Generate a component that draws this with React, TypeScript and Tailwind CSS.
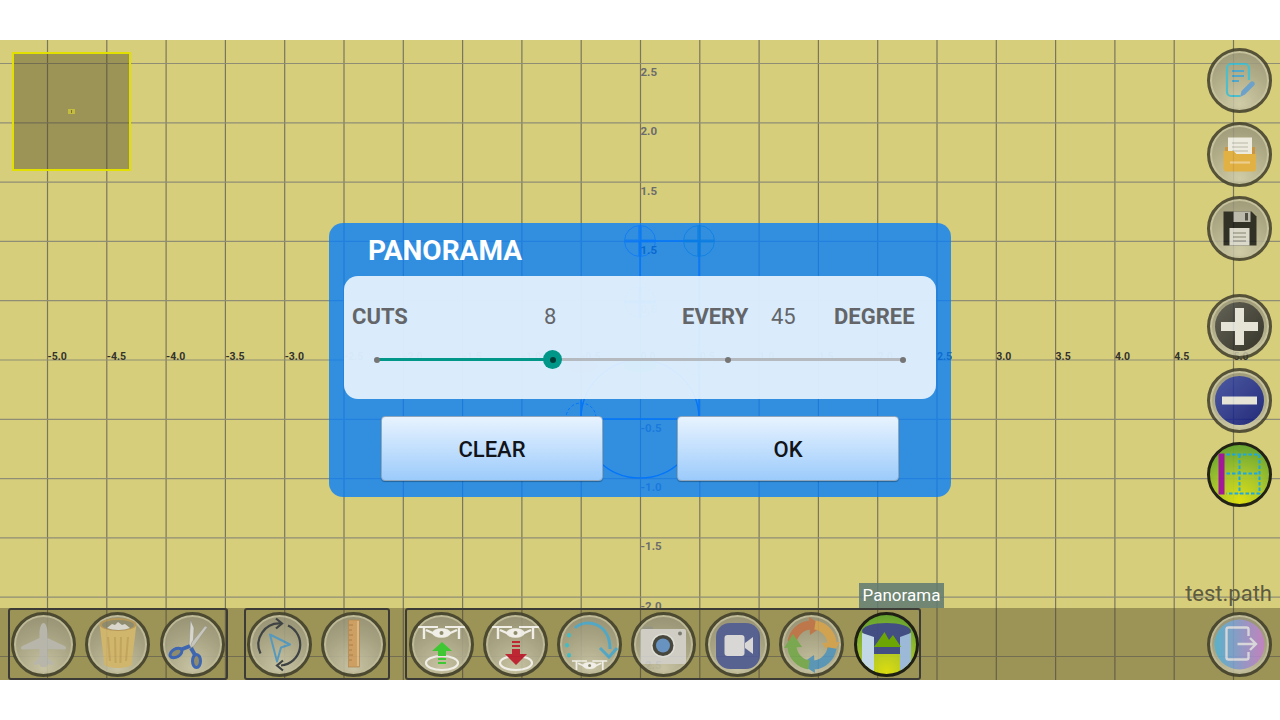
import type { ReactNode } from 'react';

const XS = [-5, -4.5, -4, -3.5, -3, -2.5, -2, -1.5, -1, -0.5, 0, 0.5, 1, 1.5, 2, 2.5, 3, 3.5, 4, 4.5, 5];
const YS = [2.5, 2, 1.5, 1, 0.5, 0, -0.5, -1, -1.5, -2, -2.5];
const STEP = 59.3;
const CX = 640.5;
const CY = 320; // canvas starts 40px down the page

function Drone({ x, y, tone, opacity = 0.75 }: { x: number; y: number; tone: string; opacity?: number }) {
  return (
    <g transform={`translate(${x} ${y})`} stroke={tone} fill="none" opacity={opacity}>
      <circle r="15.500" strokeWidth="1" />
      <path d="M-15 0H15" strokeWidth="3" />
      <path d="M0 -15V15" strokeWidth="3.500" />
    </g>
  );
}

function GridCanvas() {
  return (
    <svg className="absolute inset-0" width="1280" height="640" viewBox="0 0 1280 640">
      {XS.map(v => {
        const x = CX + v * 2 * STEP;
        return <line key={v} x1={x} x2={x} y1="0" y2="640" stroke="#7a765c" strokeWidth="1.2" />;
      })}
      {YS.map(v => {
        const y = CY - v * 2 * STEP;
        return <line key={v} x1="0" x2="1280" y1={y} y2={y} stroke="#8f8d74" strokeWidth="1.2" />;
      })}
      {/* flight path under the dialog */}
      <path d="M640 201H699V379M640 201V262M581 379H699M581 360V379" stroke="#0a5cf0" strokeWidth="1.4" fill="none" />
      <circle cx="640" cy="379" r="59" stroke="#0a5cf0" strokeWidth="1.4" fill="none" />
      <circle cx="581" cy="378" r="15" stroke="#0a5cf0" strokeWidth="1" strokeDasharray="3 2" fill="none" />
      <ellipse cx="581" cy="326" rx="17" ry="7" fill="#e0202080" />
      <ellipse cx="640" cy="326" rx="17" ry="7" fill="#20c04080" />
      <Drone x={640} y={201} tone="#1d64e0" />
      <Drone x={699} y={201} tone="#1d7a80" />
      <Drone x={640} y={262} tone="#1d64e0" />
      <Drone x={699} y={320} tone="#1d7a80" />
      {XS.map(v => (
        <text key={v} x={CX + v * 2 * STEP} y="320" fontSize="10.500" fontWeight="700" fill="#33332c" fontFamily="Roboto, sans-serif">{v.toFixed(1)}</text>
      ))}
      {YS.filter(v => v !== 0).map(v => (
        <text key={v} x="640.5" y={CY - v * 2 * STEP + 12.5} fontSize="11.500" fontWeight="700" fill={v === 1 ? '#1f2430' : '#6c6c6c'} fontFamily="Roboto, sans-serif">{v === 1 ? '1.5' : v.toFixed(1)}</text>
      ))}
    </svg>
  );
}

// Bevelled round button shared by every toolbar slot
function RoundButton({ children, face = 'glass' }: { children: ReactNode; face?: 'glass' | 'green' }) {
  const faceCls = face === 'green'
    ? 'opacity-95 bg-[radial-gradient(circle_at_50%_95%,#dfe00c_0%,#a3c42a_45%,#4f9a2e_100%)] border-[#191a10] border-[3px]'
    : 'opacity-85 bg-[radial-gradient(circle_at_50%_90%,#cfccb0_0%,#a9a68a_55%,#8e8b72_100%)] border-[#3f3d2b] border-[3px] shadow-[inset_0_0_0_2px_#c4c1a3]';
  return (
    <div className={`w-[65px] h-[65px] rounded-full shrink-0 flex items-center justify-center overflow-hidden ${faceCls}`}>
      <svg className="blur-[0.4px]" width="59" height="59" viewBox="0 0 59 59">{children}</svg>
    </div>
  );
}

const Plane = () => (
  <path d="M29.5 8c2.500 0 4 5 4 11v4l17 8c2 1 2 3 0 3.500l-17-.5v6c0 2 1 4 2.500 5l3 2c1 1 0 3-1 3l-4-1-2 3h-5l-2-3-4 1c-1 0-2-2-1-3l3-2c1.500-1 2.500-3 2.500-5v-6l-17 .5c-2-.5-2-2.500 0-3.500l17-8v-4c0-6 1.500-11 4-11z" fill="#bdbdba" />
);
const Trash = () => (
  <g>
    <path d="M11.500 9h37l-5 41c-5 4-22 4-27 0z" fill="#dabb70" />
    <ellipse cx="30" cy="9.500" rx="18.500" ry="6.500" fill="#b9995a" />
    <ellipse cx="30" cy="10" rx="16" ry="5" fill="#8d8a72" />
    <path d="M19 13l5-4 3 1 3-3 4 3 3-1 5 4c-6 2.500-17 2.500-23 0z" fill="#e4e4e0" />
    <path d="M20 22l2 24M27 22l.6 26M33 22l-.6 26M40 22l-2 24" stroke="#c8a95f" strokeWidth="2" />
  </g>
);
const Scissors = () => (
  <g>
    <path d="M27.500 5l3.500 8-1 20-4-2z" fill="#e2e2e2" stroke="#8c8c8c" strokeWidth="0.5" />
    <path d="M44.500 12L31 31l-4 2 2-6 13-16z" fill="#cfcfcf" stroke="#8c8c8c" strokeWidth="0.5" />
    <path d="M27 31L17 35" stroke="#2f5fc0" strokeWidth="4" />
    <path d="M28 33l4 7" stroke="#2f5fc0" strokeWidth="4" />
    <ellipse cx="13" cy="38" rx="6.500" ry="4" fill="#8d8a72" stroke="#2f5fc0" strokeWidth="3" transform="rotate(-30 13 38)" />
    <ellipse cx="33.500" cy="46" rx="4" ry="6.500" fill="#8d8a72" stroke="#2f5fc0" strokeWidth="3" />
  </g>
);
const Rotate = () => (
  <g fill="none">
    <path d="M10.500 38.500A21 21 0 0 1 31 8.500" stroke="#2f3640" strokeWidth="2.200" />
    <path d="M26 3.500l6 5-6 5" stroke="#2f3640" strokeWidth="2.200" />
    <path d="M38 10.500A21 21 0 0 1 31 50.500" stroke="#2f3640" strokeWidth="2.200" />
    <path d="M33 45.500l-6 5 6 5" stroke="#2f3640" strokeWidth="2.200" />
    <path d="M20 19.500l20 10-9 3-4 14z" stroke="#4b9bd0" strokeWidth="2" strokeLinejoin="round" />
  </g>
);
const Ruler = () => (
  <g>
    <rect x="24.500" y="5" width="11" height="47" fill="#d6a266" stroke="#b68a58" strokeWidth="0.8" />
    <rect x="33" y="6" width="2" height="45" fill="#e4bf8c" />
    <path d="M25 10h4M25 15h3M25 20h4M25 25h3M25 30h4M25 35h3M25 40h4M25 45h3" stroke="#a0743f" strokeWidth="0.8" />
  </g>
);
const DroneGlyph = () => (
  <g fill="none" stroke="#fff">
    <path d="M6 4h20M33 4h20" strokeWidth="1.800" />
    <path d="M12 4v12M47 4v12M14 7l9 4M45 7l-9 4" strokeWidth="2.400" />
    <ellipse cx="29.5" cy="10" rx="9" ry="4.500" fill="#fff" strokeWidth="0.5" />
    <circle cx="29.5" cy="10" r="2" fill="#8a8a70" stroke="none" />
  </g>
);
const TakeOff = () => (
  <g>
    <g transform="translate(0 8)"><DroneGlyph /></g>
    <ellipse cx="30" cy="48" rx="16" ry="7" fill="none" stroke="#fff" strokeWidth="2.200" />
    <path d="M30 27l10 9h-6v5h-8v-5h-6zM26 43h8v2h-8zM26 47h8v2h-8z" fill="#2fd22f" />
  </g>
);
const Land = () => (
  <g>
    <g transform="translate(0 8)"><DroneGlyph /></g>
    <ellipse cx="30" cy="48" rx="16" ry="7" fill="none" stroke="#fff" strokeWidth="2.200" />
    <path d="M26 26h8v2h-8zM26 30h8v2h-8zM26 34h8v5h7L30 50 19 39h7z" fill="#c3152d" />
  </g>
);
const Orbit = () => (
  <g fill="none">
    <path d="M15 13C27 2 50 9 50 34" stroke="#46acd8" strokeWidth="3" />
    <path d="M40 33l9 9 8-9" stroke="#46acd8" strokeWidth="3" />
    <path d="M9 20v.5M7 30v.5M9 40v.5" stroke="#35c4d8" strokeWidth="4" strokeLinecap="round" />
    <g transform="translate(7.500 43) scale(0.75)"><DroneGlyph /></g>
  </g>
);
const Camera = () => (
  <g>
    <rect x="6.500" y="14" width="45.500" height="35" rx="2" fill="#d8d8d8" />
    <rect x="9" y="11.500" width="10" height="2.500" fill="#96968c" />
    <circle cx="29" cy="30.500" r="12" fill="#ececec" />
    <circle cx="29" cy="30.500" r="10.500" fill="#3a3a3a" />
    <circle cx="29" cy="30.500" r="7" fill="#5f93d4" />
    <circle cx="46" cy="18.500" r="2" fill="#777" />
  </g>
);
const Video = () => (
  <g>
    <rect x="8" y="8" width="44" height="46" rx="14" fill="#4d5a9a" />
    <rect x="16.500" y="20" width="20" height="21" rx="3" fill="#e4e4ec" />
    <path d="M37 28l8-6v17l-8-6z" fill="#e4e4ec" />
  </g>
);
const CycleArrow = ({ tone, turn }: { tone: string; turn: number }) => (
  <g transform={`rotate(${turn} 30 30)`}>
    <path d="M10 27A20 20 0 0 1 28 10" fill="none" stroke={tone} strokeWidth="9" />
    <path d="M27 2L41 11 28 20z" fill={tone} />
  </g>
);
const Cycle = () => (
  <g>
    <CycleArrow tone="#c4734a" turn={0} />
    <CycleArrow tone="#dba650" turn={90} />
    <CycleArrow tone="#5097c6" turn={180} />
    <CycleArrow tone="#74ac50" turn={270} />
  </g>
);
const Pano = () => (
  <g>
    <path d="M17 20h27v19H17z" fill="#3f4c86" />
    <ellipse cx="29.500" cy="16" rx="24.500" ry="8" fill="#3f4c86" />
    <path d="M5 18l12 4v37H11L5 50z" fill="#c6dcee" />
    <path d="M54 18l-11 4v37h6l5-9z" fill="#9dbddf" />
    <path d="M17 32L27.500 17 32 25l4-5 8 12z" fill="#6aa800" />
  </g>
);
const Note = () => (
  <g fill="none">
    <path d="M30 45H21a4 4 0 0 1-4-4V17a4 4 0 0 1 4-4h14a4 4 0 0 1 4 4v12" stroke="#35bcd8" strokeWidth="2.200" />
    <path d="M22 20h12M22 25h12M22 30h7" stroke="#3aa2d8" strokeWidth="2.200" />
    <path d="M30 46l1.500-6 9-9c1-1 2.500-1 3.500 0s1 2.500 0 3.500l-9 9z" fill="#5a9ad8" />
  </g>
);
const Folder = () => (
  <g>
    <path d="M15 22h30v14H15z" fill="#c98a35" />
    <rect x="18" y="12.500" width="24" height="24" fill="#f1f1ee" />
    <path d="M22 18h16M22 22h16M22 26h16" stroke="#c9c9c5" strokeWidth="1.400" />
    <path d="M13.500 26h10l3 3h19.500v15l-1 2.500H15l-1.500-2.500z" fill="#e3ac3a" />
    <path d="M20 37.500h20" stroke="#f0cf90" strokeWidth="2.200" />
  </g>
);
const Floppy = () => (
  <g>
    <path d="M13.500 12.500h28l5 5v29h-33z" fill="#161616" />
    <rect x="23.500" y="12.500" width="17" height="10.500" fill="#b8b8b4" />
    <rect x="35" y="14" width="3" height="7.500" fill="#3a3a3a" />
    <rect x="19.500" y="29" width="20" height="17.500" fill="#dcdcd8" />
    <path d="M23 34h13M23 38h13M23 42h13" stroke="#77776f" strokeWidth="1.200" />
  </g>
);
const Plus = () => (
  <g>
    <defs>
      <linearGradient id="plusFace" x1="0" y1="0" x2="1" y2="1">
        <stop offset="0" stopColor="#505050" />
        <stop offset="1" stopColor="#1c1c1c" />
      </linearGradient>
    </defs>
    <circle cx="29.5" cy="29.5" r="24.5" fill="url(#plusFace)" />
    <path d="M25 11h9v14h14v9H34v14h-9V34H11v-9h14z" fill="#e8e8e8" />
  </g>
);
const Minus = () => (
  <g>
    <defs>
      <linearGradient id="minusFace" x1="0" y1="0" x2="1" y2="1">
        <stop offset="0" stopColor="#3646aa" />
        <stop offset="1" stopColor="#040f78" />
      </linearGradient>
    </defs>
    <circle cx="29.5" cy="29.5" r="24.5" fill="url(#minusFace)" />
    <rect x="12" y="25.500" width="35" height="8" fill="#e8e8e8" />
  </g>
);
const Split = () => (
  <g>
    <rect x="8.500" y="8.500" width="6" height="41" fill="#a0109a" />
    <path d="M16.500 9.500h33v39h-33M16.500 28.500h33M29.500 9.500v39" fill="none" stroke="#12a6ea" strokeWidth="2" strokeDasharray="3.500 2" />
  </g>
);
const Logout = () => (
  <g>
    <defs>
      <linearGradient id="exitFace" x1="0" y1="0" x2="1" y2="0">
        <stop offset="0" stopColor="#4fb8de" />
        <stop offset="1" stopColor="#c980d0" />
      </linearGradient>
    </defs>
    <circle cx="29.5" cy="29.5" r="25" fill="url(#exitFace)" />
    <path d="M38.500 21v-6.500a2 2 0 0 0-2-2h-18a2 2 0 0 0-2 2v28a2 2 0 0 0 2 2h18a2 2 0 0 0 2-2V37" fill="none" stroke="#e2e2f0" strokeWidth="2.400" />
    <path d="M27.500 29h18M40 23l6 6-6 6" fill="none" stroke="#e2e2f0" strokeWidth="2.400" />
  </g>
);

function ToolGroup({ children, className }: { children: ReactNode; className: string }) {
  return (
    <div className={`flex items-center h-[72px] border-2 border-[#3c3b35] rounded-[3px] ${className}`}>
      {children}
    </div>
  );
}

function DialogButton({ label }: { label: string }) {
  return (
    <button className="w-[222px] h-[65px] pt-[1px] rounded-[4px] border border-[#8fa6bd] bg-gradient-to-b from-[#e8f3fe] to-[#9ccbfb] text-[22px] font-medium text-[#111418] shadow-[0_1px_1px_#0000004d]">
      {label}
    </button>
  );
}

function Dialog() {
  return (
    <div className="absolute left-[329px] top-[183px] w-[622px] h-[274px] rounded-[14px] bg-[#037dfcc6] px-[15px]">
      <h2 className="pl-[24px] pt-[9px] h-[53px] text-[28px] leading-[37px] font-bold text-white">PANORAMA</h2>
      <div className="h-[123px] rounded-[14px] bg-[#f4faffde] px-[8px] pt-[24px]">
        <div className="flex items-center h-[32px] text-[22px] text-[#636569]">
          <span className="w-[192px] font-bold">CUTS</span>
          <span className="w-[138px] font-normal">8</span>
          <span className="w-[89px] font-bold">EVERY</span>
          <span className="w-[63px] font-normal">45</span>
          <span className="font-bold">DEGREE</span>
        </div>
        <div className="relative mx-[25px] h-[21px] mt-[17px] flex items-center">
          <div className="h-[3px] w-[175px] bg-[#009688]" />
          <div className="h-[3px] flex-1 bg-[#b5bac0]" />
          <span className="absolute left-0 w-[6px] h-[6px] -ml-[3px] rounded-full bg-[#757575]" />
          <span className="absolute left-[351px] w-[6px] h-[6px] -ml-[3px] rounded-full bg-[#757575]" />
          <span className="absolute right-0 w-[6px] h-[6px] -mr-[3px] rounded-full bg-[#757575]" />
          <span className="absolute left-[175px] w-[19px] h-[19px] -ml-[9px] rounded-full bg-[#009688] flex items-center justify-center">
            <span className="w-[6px] h-[6px] rounded-full bg-[#003d38]" />
          </span>
        </div>
      </div>
      <div className="flex gap-[74px] pl-[37px] mt-[17px]">
        <DialogButton label="CLEAR" />
        <DialogButton label="OK" />
      </div>
    </div>
  );
}

export default function App() {
  return (
    <div className="w-[1280px] h-[720px] bg-white py-[40px] overflow-hidden font-['Roboto',sans-serif]">
      <div className="relative w-[1280px] h-[640px] bg-[#d7ce7c] overflow-hidden">
        <GridCanvas />

        {/* mini map */}
        <div className="absolute left-[12px] top-[12px] w-[119px] h-[119px] bg-[#5048286f] border-2 border-[#e2e000] flex items-center justify-center">
          <div className="w-[7px] h-[5px] bg-[#c3bc3c] flex items-center justify-center">
            <div className="w-[1px] h-[3px] bg-[#77733a]" />
          </div>
        </div>

        {/* right column */}
        <div className="absolute right-[8px] top-[8px] flex flex-col gap-[9px]">
          <RoundButton><Note /></RoundButton>
          <RoundButton><Folder /></RoundButton>
          <RoundButton><Floppy /></RoundButton>
          <div className="h-[15px]" />
          <RoundButton><Plus /></RoundButton>
          <RoundButton><Minus /></RoundButton>
          <RoundButton face="green"><Split /></RoundButton>
        </div>

        <Dialog />

        {/* bottom strip */}
        <div className="absolute left-0 right-0 bottom-0 h-[72px] bg-[#5048286f] flex items-center px-[8px]">
          <ToolGroup className="w-[220px] pl-[0.5px] gap-[9.5px]">
            <RoundButton><Plane /></RoundButton>
            <RoundButton><Trash /></RoundButton>
            <RoundButton><Scissors /></RoundButton>
          </ToolGroup>
          <div className="w-[16px]" />
          <ToolGroup className="w-[146px] pl-[0.5px] gap-[9px]">
            <RoundButton><Rotate /></RoundButton>
            <RoundButton><Ruler /></RoundButton>
          </ToolGroup>
          <div className="w-[15px]" />
          <ToolGroup className="w-[516px] pl-[1.5px] gap-[9.2px]">
            <RoundButton><TakeOff /></RoundButton>
            <RoundButton><Land /></RoundButton>
            <RoundButton><Orbit /></RoundButton>
            <RoundButton><Camera /></RoundButton>
            <RoundButton><Video /></RoundButton>
            <RoundButton><Cycle /></RoundButton>
            <RoundButton face="green"><Pano /></RoundButton>
          </ToolGroup>
          <div className="ml-auto"><RoundButton><Logout /></RoundButton></div>
        </div>

        <div className="absolute left-[859px] top-[543px] w-[85px] h-[25px] bg-[#5f7a72d9] text-white text-[17px] leading-[25px] text-center">Panorama</div>
        <div className="absolute right-[8px] top-[541px] text-[22px] leading-[26px] text-[#5e5b3e]">test.path</div>
      </div>
    </div>
  );
}
